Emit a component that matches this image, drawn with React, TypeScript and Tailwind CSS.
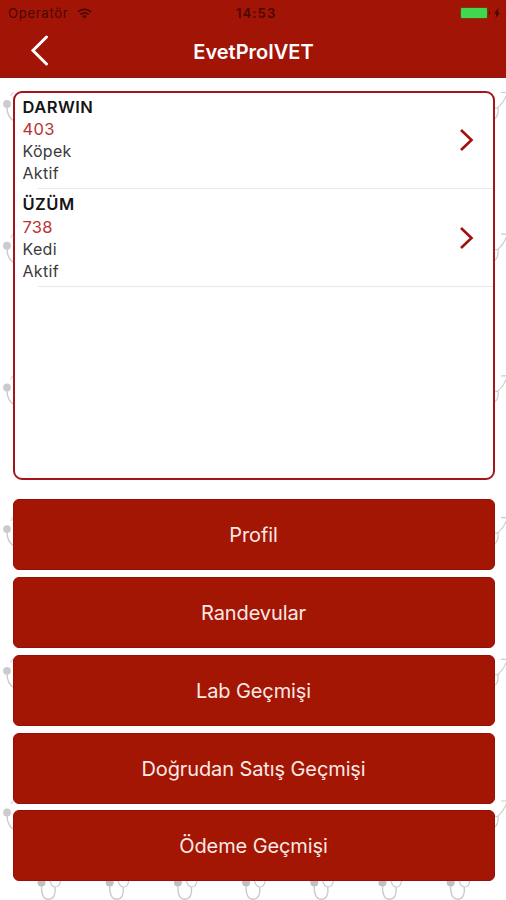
import { useState } from "react";

interface Pet {
  name: string;
  code: string;
  species: string;
  status: string;
}

const PETS: Pet[] = [
  { name: "DARWIN", code: "403", species: "Köpek", status: "Aktif" },
  { name: "ÜZÜM", code: "738", species: "Kedi", status: "Aktif" },
];

const MENU: string[] = [
  "Profil",
  "Randevular",
  "Lab Geçmişi",
  "Doğrudan Satış Geçmişi",
  "Ödeme Geçmişi",
];

const SIDE_ROWS = [0, 1, 2, 3, 4, 5];
const BOTTOM_COLS = [0, 1, 2, 3, 4, 5, 6];

// Stethoscope wallpaper that shows around the panels
function Wallpaper() {
  return (
    <svg
      className="absolute inset-0 pointer-events-none"
      width="506"
      height="900"
      fill="none"
      stroke="#cbcbcd"
      strokeWidth="1.4"
    >
      {SIDE_ROWS.map((i) => (
        <g key={i} transform={`translate(0 ${i * 141.7})`}>
          <circle cx="7" cy="104" r="3.9" fill="#cbcbcd" stroke="none" />
          <path d="M7 107c0 7 2 11 7 14" />
          <path d="M11 96c0-2 1-3 3-3.500" stroke="#dedee0" />
          <path d="M501 92.500h5M506 96c-1.500 5-4 8-8 11.500c-1.500 1-3 .5-4.500-.5M498 107.500c.8 6-.5 10-5 12" strokeWidth="1.200" />
        </g>
      ))}
      {BOTTOM_COLS.map((i) => (
        <g key={i} transform={`translate(${i * 68.2} 0)`}>
          <circle cx="41.500" cy="882.500" r="4" fill="#c6bebe" stroke="none" />
          <path d="M41.500 886c-.5 8 2 13.200 7 13.200s7.500-5 6.500-12" />
          <path d="M50 881c1 4 3 6 5.500 6s4.500-2 5-6" strokeWidth="1.200" />
        </g>
      ))}
    </svg>
  );
}

function StatusBar() {
  return (
    <div className="relative flex h-[26px] items-center justify-between pl-2 pr-[5px] text-[13px] text-[#4b0803]">
      <div className="flex items-center gap-[8px] pt-px">
        <span className="tracking-[0.75px]">Operatör</span>
        <svg width="15" height="11" viewBox="0 0 16 12" fill="none" stroke="#4b0803" strokeWidth="1.900">
          <path d="M1 4.200c4-3.600 10-3.600 14 0M3.500 7c2.600-2.300 6.400-2.300 9 0" />
          <path d="M8 11.500L5.500 9c1.500-1.300 3.500-1.300 5 0z" fill="#4b0803" stroke="none" />
        </svg>
      </div>
      <span className="absolute left-[236px] top-[4px] font-semibold tracking-[1.1px]">14:53</span>
      <svg width="41" height="12" viewBox="0 0 41 12">
        <rect x="0.500" y="0.500" width="27" height="11" rx="1.500" fill="#41d850" stroke="#7d3a08" />
        <path d="M29 4v4c1.300-.5 1.300-3.500 0-4z" fill="#3d0703" />
        <path d="M38.500 1l-4.500 5.500h2.500l-1 4.500 4.500-5.500h-2.500z" fill="#3d0703" />
      </svg>
    </div>
  );
}

function Header() {
  return (
    <header className="relative h-[78px] border-b border-[#8d1712] bg-[#a21405]">
      <StatusBar />
      <div className="relative flex h-[52px] items-center justify-center">
        <button className="absolute left-[30px] top-[9px]">
          <svg width="20" height="32" viewBox="0 0 20 32" fill="none" stroke="#fff" strokeWidth="3" strokeLinecap="round">
            <path d="M16.500 2L3 15.500 16.500 29" />
          </svg>
        </button>
        <h1 className="pl-px text-[20px] font-semibold text-white">EvetProIVET</h1>
      </div>
    </header>
  );
}

function PetRow({ pet, onSelect }: { pet: Pet; onSelect: () => void }) {
  return (
    <li className="relative h-[97.500px] cursor-pointer" onClick={onSelect}>
      <div className="flex h-full items-center justify-between pl-2 pr-[18px]">
        <div className="text-[16px] leading-[22.200px] tracking-[0.3px] text-[#3a3a3a]">
          <p className="text-[16.500px] font-semibold tracking-[0.45px] text-[#151515]">{pet.name}</p>
          <p className="text-[16.500px] text-[#b83430]">{pet.code}</p>
          <p>{pet.species}</p>
          <p>{pet.status}</p>
        </div>
        <svg width="16" height="24" viewBox="0 0 16 24" fill="none" stroke="#a30f0f" strokeWidth="2.600">
          <path d="M2 2l10.500 10L2 22" />
        </svg>
      </div>
      <div className="absolute bottom-0 left-[23px] right-0 h-px bg-[#e8e8e8]" />
    </li>
  );
}

export default function App() {
  const [, setSelected] = useState<string | null>(null);

  return (
    <div className="relative h-[900px] w-[506px] overflow-hidden bg-white font-['Inter','Liberation_Sans',sans-serif]">
      <Wallpaper />
      <Header />
      <main className="relative pl-[12.500px] pr-[11.500px] pt-[13px]">
        <div className="h-[389px] rounded-[9px] border-2 border-[#a5141a] bg-white">
          <ul className="-mt-[1.500px]">
            {PETS.map((pet) => (
              <PetRow key={pet.code} pet={pet} onSelect={() => setSelected(pet.code)} />
            ))}
          </ul>
        </div>
        <div className="mt-[19.200px] flex flex-col gap-[6.800px]">
          {MENU.map((label) => (
            <button
              key={label}
              className="h-[71px] rounded-[6px] border border-[#9a0c0a] bg-[#a21603] pt-px text-[20px] tracking-[-0.1px] text-[#fbe9e6]"
            >
              {label}
            </button>
          ))}
        </div>
      </main>
    </div>
  );
}
